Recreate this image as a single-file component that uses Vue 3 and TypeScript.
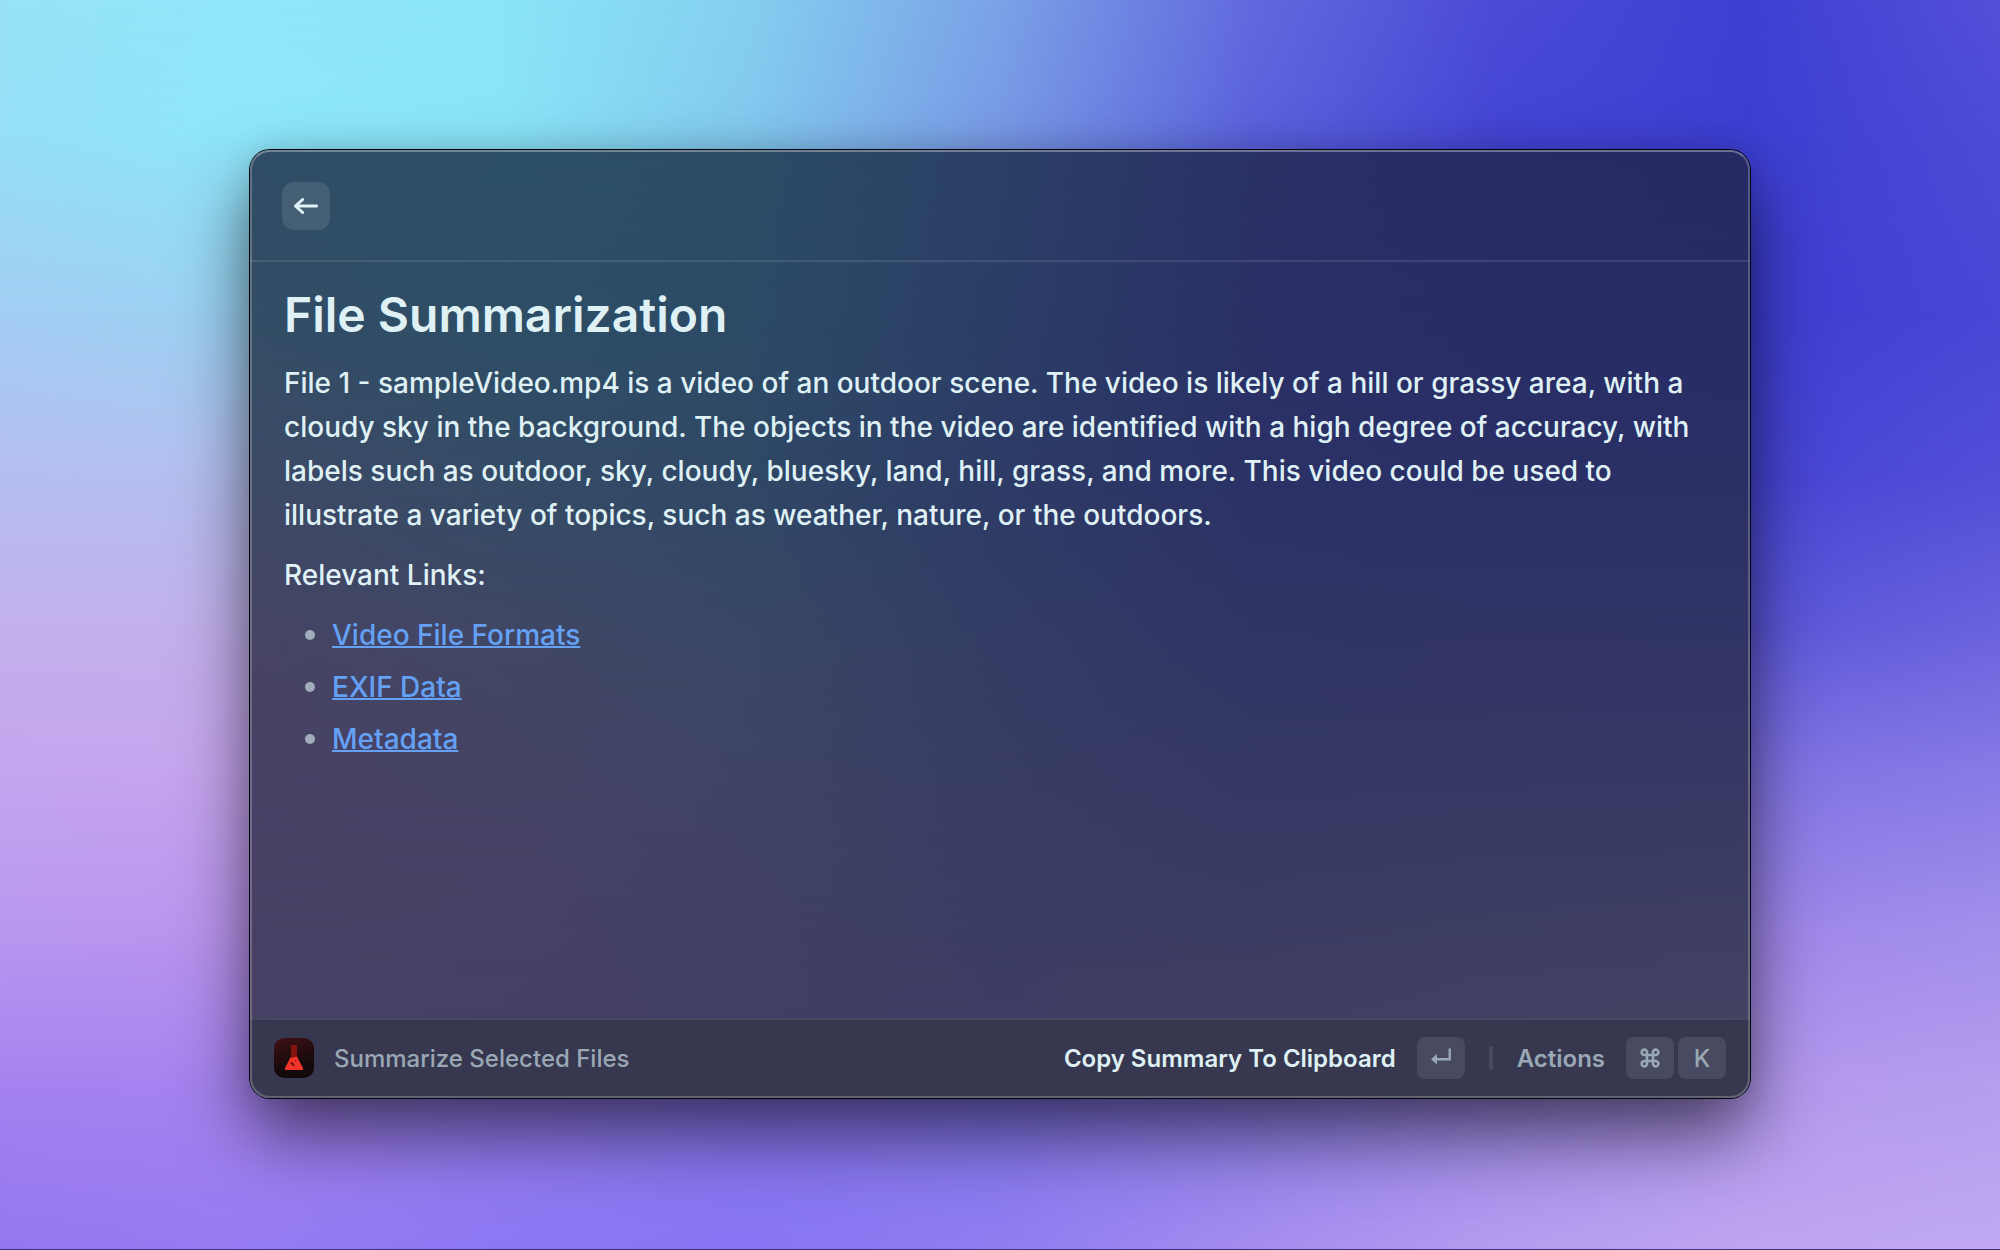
<script setup lang="ts">
interface MeshRow {
  at: number
  colors: string[]
}

interface RelevantLink {
  label: string
  href: string
}

const desktopMesh: MeshRow[] = [
  { at: 0, colors: ['#97e2f6', '#90e6f9', '#8be5f8', '#84cff0', '#7ba2e7', '#626ade', '#4a4bd6', '#3d40d3', '#5450d9'] },
  { at: 11, colors: ['#95dff6', '#8ee6fa', '#8ae4f7', '#82c8ee', '#7899e5', '#5a62dc', '#4345d4', '#3c3fd2', '#4c4bd6'] },
  { at: 25, colors: ['#a3cdf3', '#9bd3f3', '#8ed0f0', '#80a8e6', '#6a78dd', '#4a50d5', '#3d40d1', '#3d3ed2', '#4747d5'] },
  { at: 38, colors: ['#b5beef', '#b4bfef', '#9fb6ea', '#8390e0', '#6068d8', '#4649d2', '#3f40d0', '#4644d4', '#524fd8'] },
  { at: 50, colors: ['#c2b0ec', '#c2b1ec', '#b0a4e8', '#8a86e0', '#6464d8', '#504fd4', '#4a49d3', '#5b56d9', '#6a62dd'] },
  { at: 62, colors: ['#c5a5ef', '#c6a5ee', '#b79be9', '#9384e2', '#7470dc', '#6560d9', '#6460da', '#8073e3', '#887be6'] },
  { at: 75, colors: ['#b896ef', '#ba94ee', '#a98bea', '#907ee8', '#8175e4', '#7c70e2', '#8478e4', '#a087ea', '#a390eb'] },
  { at: 87, colors: ['#a483f0', '#a583ef', '#987df0', '#8b78f0', '#8577ef', '#8e7fec', '#a08bea', '#b398ee', '#b59eee'] },
  { at: 100, colors: ['#9377ef', '#957bf2', '#8c77f2', '#8674f2', '#8f7df0', '#a48cee', '#b49cef', '#bda5f0', '#c0a9f2'] },
]

const panelMesh: MeshRow[] = [
  { at: 0, colors: ['#2f4d65', '#2c4f67', '#2b4c66', '#2b4066', '#2a3166', '#272c65', '#272b64'] },
  { at: 18, colors: ['#334d66', '#2e4e66', '#2c4a66', '#2b3e66', '#2a3066', '#282d66', '#282c65'] },
  { at: 36, colors: ['#3e4966', '#364b66', '#304866', '#2e3b66', '#2c3266', '#2b3066', '#2b3066'] },
  { at: 54, colors: ['#474365', '#424664', '#3b4665', '#353d65', '#313665', '#323565', '#323566'] },
  { at: 72, colors: ['#484165', '#464265', '#404265', '#3a3d64', '#383a64', '#393b64', '#3a3b64'] },
  { at: 91, colors: ['#484064', '#473f64', '#413f65', '#3e3d64', '#403f63', '#424163', '#444263'] },
  { at: 100, colors: ['#484064', '#473f64', '#413f65', '#3e3d64', '#403f63', '#424163', '#444263'] },
]

function bandStyle(rows: MeshRow[], index: number) {
  const row = rows[index]
  const background = `linear-gradient(90deg, ${row.colors.join(', ')})`
  if (index === 0) return { background }
  const mask = `linear-gradient(180deg, transparent ${rows[index - 1].at}%, #000 ${row.at}%)`
  return { background, maskImage: mask }
}

const links: RelevantLink[] = [
  { label: 'Video File Formats', href: '#video-file-formats' },
  { label: 'EXIF Data', href: '#exif-data' },
  { label: 'Metadata', href: '#metadata' },
]
</script>

<template>
  <div class="desktop">
    <div class="mesh" aria-hidden="true">
      <div v-for="(row, i) in desktopMesh" :key="row.at" class="band" :style="bandStyle(desktopMesh, i)"></div>
    </div>

    <main class="panel">
      <div class="mesh" aria-hidden="true">
        <div v-for="(row, i) in panelMesh" :key="row.at" class="band" :style="bandStyle(panelMesh, i)"></div>
      </div>

      <header class="top">
        <button class="back" type="button" aria-label="Back">
          <svg width="32" height="32" viewBox="0 0 32 32" fill="none" stroke="currentColor" stroke-width="2.8" stroke-linecap="round" stroke-linejoin="round">
            <path d="M26.700 16H5.600M12.800 9.400 5.400 16l7.400 6.600" />
          </svg>
        </button>
      </header>

      <article class="content">
        <h1>File Summarization</h1>
        <p>
          File 1 - sampleVideo.mp4 is a video of an outdoor scene. The video is likely of a hill or grassy area, with a
          cloudy sky in the background. The objects in the video are identified with a high degree of accuracy, with
          labels such as outdoor, sky, cloudy, bluesky, land, hill, grass, and more. This video could be used to
          illustrate a variety of topics, such as weather, nature, or the outdoors.
        </p>
        <p>Relevant Links:</p>
        <ul>
          <li v-for="link in links" :key="link.href">
            <a :href="link.href">{{ link.label }}</a>
          </li>
        </ul>
      </article>

      <footer class="bar">
        <svg class="app-icon" width="40" height="40" viewBox="0 0 40 40" aria-hidden="true">
          <defs>
            <linearGradient id="tile" x1="0" y1="0" x2="0.3" y2="1">
              <stop offset="0" stop-color="#3f1013" />
              <stop offset="0.8" stop-color="#140a0c" />
            </linearGradient>
          </defs>
          <rect width="40" height="40" rx="10" fill="url(#tile)" />
          <path d="M17 7h6v13h-6z" fill="#86150f" />
          <path d="M16.600 19.300c2.400 1.600 4.200-1.200 6.600-.4l5.800 11.100c.6 1-.1 2-1.200 2H12.200c-1.100 0-1.800-1-1.200-2z" fill="#f23529" />
          <path d="m17.600 25 1.800 2" stroke="#7c130e" stroke-width="2.200" stroke-linecap="round" />
          <circle cx="21.600" cy="23" r="0.700" fill="#86150f" />
        </svg>
        <span class="command">Summarize Selected Files</span>
        <button class="action primary" type="button">
          Copy Summary To Clipboard
          <kbd>
            <svg width="24" height="24" viewBox="0 0 24 24" aria-label="Return">
              <path d="M20.700 2.500v10.700H7" fill="none" stroke="currentColor" stroke-width="2.400" />
              <path d="M2 13.200 8 8v10.400z" fill="currentColor" />
            </svg>
          </kbd>
        </button>
        <span class="divider"></span>
        <button class="action" type="button">
          Actions
          <span class="keys">
            <kbd>
              <svg width="24" height="24" viewBox="0 0 24 24" fill="none" stroke="currentColor" stroke-width="2.600" aria-label="Command">
                <path d="M9 9V6.400A2.700 2.700 0 1 0 6.300 9H17.700A2.700 2.700 0 1 0 15 6.400V17.600A2.700 2.700 0 1 0 17.700 15H6.300A2.700 2.700 0 1 0 9 17.600z" />
              </svg>
            </kbd>
            <kbd>K</kbd>
          </span>
        </button>
      </footer>
    </main>
  </div>
</template>

<style>
body {
  margin: 0;
}
</style>

<style scoped>
.desktop {
  position: relative;
  box-sizing: border-box;
  display: flex;
  flex-direction: column;
  min-height: 100vh;
  padding: 150px 12.5% 151px;
  border-bottom: 1px solid #3a3080;
  font-family: Inter, 'Liberation Sans', sans-serif;
  color: #dff1f5;
}

.mesh {
  position: absolute;
  inset: 0;
  z-index: 0;
  overflow: hidden;
  border-radius: inherit;
}

.band {
  position: absolute;
  inset: 0;
}

.panel {
  position: relative;
  z-index: 1;
  flex: 1;
  display: flex;
  flex-direction: column;
  border-radius: 20px;
  box-shadow:
    0 0 0 1px #02050a,
    0 36px 72px rgba(0, 0, 0, 0.58),
    0 0 32px rgba(0, 0, 0, 0.1);
}

.panel::after {
  content: '';
  position: absolute;
  inset: 0;
  z-index: 2;
  border: 2px solid rgba(255, 255, 255, 0.22);
  border-top-color: rgba(255, 255, 255, 0.32);
  border-radius: inherit;
  pointer-events: none;
}

.top,
.content,
.bar {
  position: relative;
  z-index: 1;
}

.top {
  padding: 32px 32px 30px;
  border-bottom: 2px solid rgba(255, 255, 255, 0.1);
}

button {
  padding: 0;
  border: 0;
  background: none;
  color: inherit;
  font: inherit;
  cursor: pointer;
}

.back {
  display: flex;
  align-items: center;
  justify-content: center;
  width: 48px;
  height: 48px;
  border-radius: 12px;
  background: rgba(255, 255, 255, 0.1);
}

.content {
  flex: 1;
  padding: 23px 48px 22px 34px;
  font-size: 28px;
  font-weight: 500;
  line-height: 44px;
}

h1 {
  margin: 0 0 16px;
  font-size: 48px;
  font-weight: 600;
  line-height: 60px;
}

p,
ul {
  margin: 0 0 16px;
}

ul {
  display: flex;
  flex-direction: column;
  gap: 8px;
  padding: 0;
  list-style: none;
}

li {
  display: flex;
  align-items: center;
  gap: 17px;
  padding-left: 21px;
}

li::before {
  content: '';
  width: 10px;
  height: 10px;
  border-radius: 50%;
  background: #a2adbb;
}

a {
  color: #64a1f4;
  text-decoration: underline;
  text-decoration-skip-ink: none;
  text-decoration-thickness: 2px;
  text-underline-offset: 1px;
}

.bar {
  display: flex;
  align-items: center;
  height: 76px;
  padding: 0 24px 2px;
  border-top: 2px solid #47485e;
  border-radius: 0 0 20px 20px;
  background: #37384f;
  color: #9aa8b5;
  font-size: 24px;
  font-weight: 500;
  line-height: 33px;
}

.command {
  flex: 1;
  margin-left: 20px;
}

.action {
  display: flex;
  align-items: center;
  gap: 21px;
  font-weight: 600;
}

.primary {
  color: #dff1f5;
}

.divider {
  width: 4px;
  height: 24px;
  margin: 0 24px;
  border-radius: 2px;
  background: #47495f;
}

.keys {
  display: flex;
  gap: 4px;
}

kbd {
  display: flex;
  align-items: center;
  justify-content: center;
  width: 48px;
  height: 42px;
  border-radius: 8px;
  background: #474a60;
  color: #9aa8b5;
  font: inherit;
  font-weight: 500;
}
</style>
